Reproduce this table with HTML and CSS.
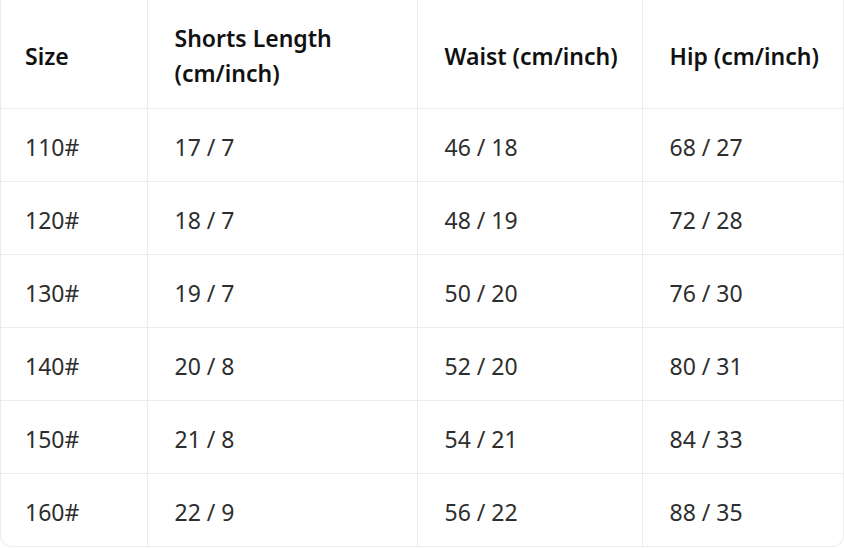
FILE: index.html
```html
<!DOCTYPE html>
<html lang="en">
<head>
<meta charset="utf-8">
<title>Size Chart</title>
<link rel="stylesheet" href="styles.css">
</head>
<body>
<div class="table-wrap">
  <table class="size-table">
    <colgroup>
      <col class="c1"><col class="c2"><col class="c3"><col class="c4">
    </colgroup>
    <thead>
      <tr>
        <th>Size</th>
        <th>Shorts Length<br>(cm/inch)</th>
        <th>Waist (cm/inch)</th>
        <th>Hip (cm/inch)</th>
      </tr>
    </thead>
    <tbody>
      <tr><td>110#</td><td>17 / 7</td><td>46 / 18</td><td>68 / 27</td></tr>
      <tr><td>120#</td><td>18 / 7</td><td>48 / 19</td><td>72 / 28</td></tr>
      <tr><td>130#</td><td>19 / 7</td><td>50 / 20</td><td>76 / 30</td></tr>
      <tr><td>140#</td><td>20 / 8</td><td>52 / 20</td><td>80 / 31</td></tr>
      <tr><td>150#</td><td>21 / 8</td><td>54 / 21</td><td>84 / 33</td></tr>
      <tr><td>160#</td><td>22 / 9</td><td>56 / 22</td><td>88 / 35</td></tr>
    </tbody>
  </table>
</div>
</body>
</html>
```
FILE: styles.css
```css
html, body {
  margin: 0;
  padding: 0;
  background: #ffffff;
}

body {
  font-family: "Segoe UI", "Noto Sans", "Open Sans", sans-serif;
  font-size: 23px;
  line-height: 35px;
  color: #2e2e2e;
}

.table-wrap {
  width: 844px;
  box-sizing: border-box;
  border: 1px solid #ececec;
  border-top: none;
  border-radius: 0 0 12px 12px;
  overflow: hidden;
}

.size-table {
  width: 100%;
  border-collapse: collapse;
  table-layout: fixed;
}

.c1 { width: 146px; }
.c2 { width: 270px; }
.c3 { width: 225px; }
.c4 { width: auto; }

.size-table th,
.size-table td {
  text-align: left;
  vertical-align: middle;
  padding: 21px 10px 16px 27px;
  border-right: 1px solid #ececec;
  border-bottom: 1px solid #ececec;
  white-space: nowrap;
}

.size-table th {
  padding-top: 21px;
  padding-bottom: 17px;
  font-weight: 600;
  color: #111111;
}

.size-table th:last-child,
.size-table td:last-child {
  border-right: none;
}

.size-table tbody tr:last-child td {
  border-bottom: none;
}

.size-table th:first-child,
.size-table td:first-child {
  padding-left: 24px;
}
```
